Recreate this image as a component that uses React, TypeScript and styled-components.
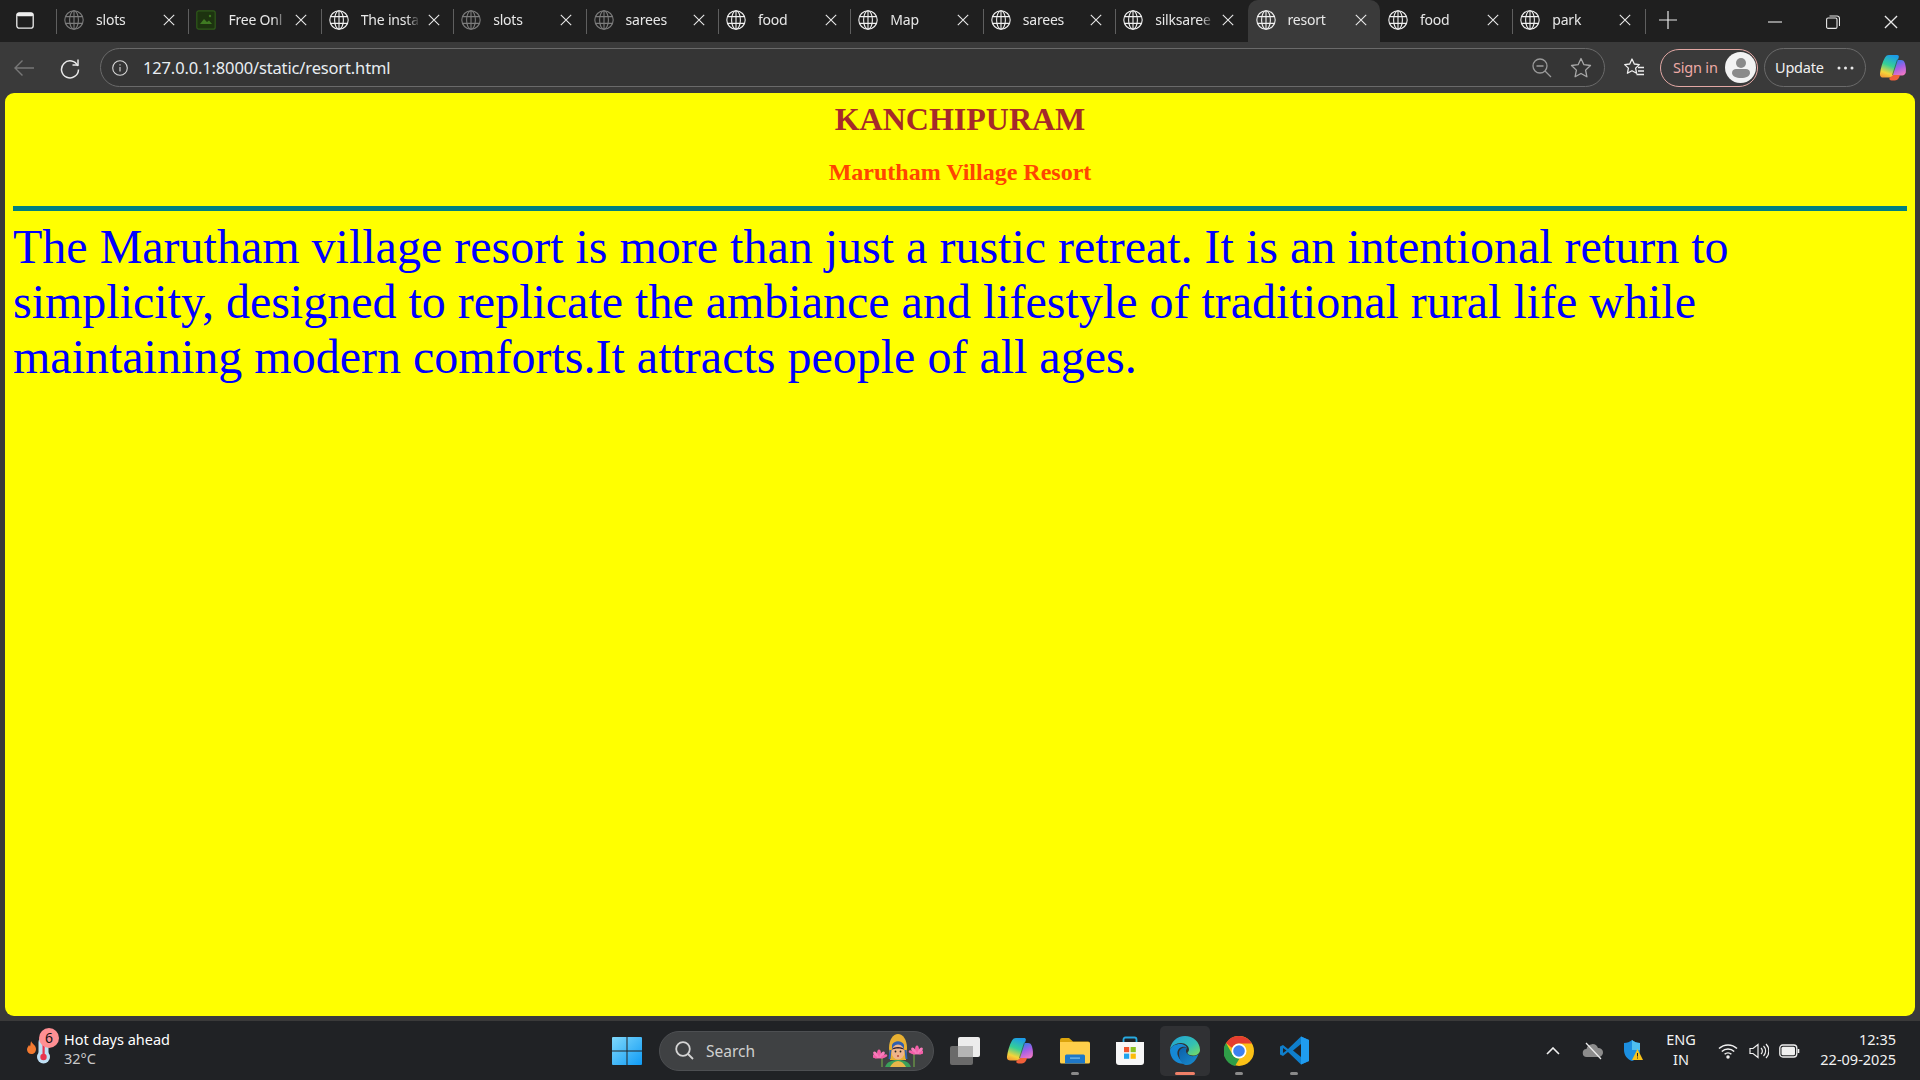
import React from 'react';
import styled, { createGlobalStyle } from 'styled-components';

const Global = createGlobalStyle`
  html, body { margin: 0; padding: 0; height: 100%; overflow: hidden; }
  body { font-family: "Noto Sans", "Open Sans", sans-serif; background: #202124; }
`;

const Screen = styled.div`
  width: 1920px;
  height: 1080px;
  display: flex;
  flex-direction: column;
`;

/* tab strip */
const TabStrip = styled.div`
  height: 42px;
  flex: none;
  display: flex;
  align-items: stretch;
  background: #1f1f1f;
  padding-left: 56px;
  position: relative;
`;

const SidebarButton = styled.div`
  position: absolute;
  left: 16px;
  top: 12px;
  display: flex;
`;

const Tab = styled.div<{ $active?: boolean; $noSep?: boolean }>`
  flex: 0 0 132.4px;
  box-sizing: border-box;
  height: 42px;
  display: flex;
  align-items: center;
  padding: 0 0 2px 8px;
  position: relative;
  color: #e8e8e8;
  background: ${(p) => (p.$active ? '#3a3a3a' : 'transparent')};
  border-radius: ${(p) => (p.$active ? '10px 10px 0 0' : '0')};

  &::before {
    content: '';
    display: ${(p) => (p.$noSep ? 'none' : 'block')};
    position: absolute;
    left: 0;
    top: 9px;
    height: 25px;
    width: 1px;
    background: #5f5f5f;
  }
`;

const TabTitle = styled.span`
  width: 59px;
  margin: 0 0 2px 12px;
  font-size: 14px;
  letter-spacing: -0.2px;
  white-space: nowrap;
  overflow: hidden;
  -webkit-mask-image: linear-gradient(to right, #000 78%, transparent 100%);
  mask-image: linear-gradient(to right, #000 78%, transparent 100%);
`;

const TabClose = styled.span`
  display: flex;
  margin-left: 8px;
`;

const NewTab = styled.div`
  position: relative;
  width: 46px;
  display: flex;
  align-items: center;
  justify-content: center;
  padding-bottom: 2px;

  &::before {
    content: '';
    position: absolute;
    left: 0;
    top: 9px;
    height: 25px;
    width: 1px;
    background: #5f5f5f;
  }
`;

const WindowControls = styled.div`
  margin-left: auto;
  display: flex;
  align-items: center;
`;

const WindowControl = styled.div`
  width: 58px;
  height: 42px;
  display: flex;
  align-items: center;
  justify-content: center;
  padding-top: 2px;
  box-sizing: border-box;
`;

/* toolbar */
const Toolbar = styled.div`
  height: 51px;
  flex: none;
  background: #3a3a3a;
  display: flex;
  align-items: center;
`;

const NavButton = styled.div<{ $w: number; $ml?: number }>`
  width: ${(p) => p.$w}px;
  margin-left: ${(p) => p.$ml ?? 0}px;
  flex: none;
  display: flex;
  justify-content: center;
  align-items: center;
`;

const AddressBar = styled.div`
  width: 1505px;
  height: 39px;
  flex: none;
  box-sizing: border-box;
  margin-left: 8px;
  border: 1px solid #6a6a6a;
  border-radius: 20px;
  background: #353535;
  display: flex;
  align-items: center;
  padding: 0 12px 0 11px;
`;

const Url = styled.span`
  margin-left: 15px;
  font-size: 16.5px;
  letter-spacing: -0.15px;
  color: #e8edf2;
`;

const BarIcons = styled.div`
  margin-left: auto;
  display: flex;
  align-items: center;
  gap: 18px;
`;

const SignIn = styled.div`
  width: 98px;
  height: 38px;
  flex: none;
  box-sizing: border-box;
  border: 1.5px solid #e3a8a4;
  border-radius: 19px;
  display: flex;
  align-items: center;
  justify-content: space-between;
  padding: 0 1px 0 12px;
  color: #eeaaa6;
  font-size: 14.5px;
  letter-spacing: -0.2px;
`;

const PillLabel = styled.span`
  margin-bottom: 2px;
`;

const Avatar = styled.div`
  width: 31px;
  height: 31px;
  border-radius: 50%;
  background: #f2f2f2;
  display: flex;
  align-items: center;
  justify-content: center;
`;

const UpdatePill = styled.div`
  width: 102px;
  height: 39px;
  flex: none;
  box-sizing: border-box;
  margin-left: 6px;
  border: 1px solid #6a6a6a;
  border-radius: 20px;
  display: flex;
  align-items: center;
  justify-content: space-between;
  padding: 0 11px 0 10px;
  color: #f0f0f0;
  font-size: 14.5px;
  letter-spacing: -0.2px;
`;

const CopilotSlot = styled.div`
  margin-left: 13px;
  display: flex;
`;

/* page */
const PageFrame = styled.div`
  flex: 1;
  min-height: 0;
  background: #3a3a3a;
  padding: 0 5px 5px;
  display: flex;
`;

const Page = styled.main`
  flex: 1;
  background: #ffff00;
  border-radius: 9px;
  padding: 0 8px;
  font-family: "Liberation Serif", "Times New Roman", serif;
  overflow: hidden;
`;

const City = styled.h1`
  margin: 8px 0 0;
  text-align: center;
  font-size: 32px;
  line-height: 37px;
  color: #a52a2a;
`;

const ResortName = styled.h2`
  margin: 21px 0 0;
  text-align: center;
  font-size: 24px;
  line-height: 27px;
  color: #ff4500;
`;

const Rule = styled.div`
  height: 5px;
  margin-top: 20px;
  background: #008080;
`;

const Body = styled.p`
  margin: 8px 0 0;
  font-size: 48px;
  line-height: 55px;
  color: #0000ff;
`;

/* taskbar */
const Taskbar = styled.footer`
  height: 59px;
  flex: none;
  background: #202225;
  display: flex;
  align-items: center;
  color: #fff;
`;

const Weather = styled.div`
  width: 600px;
  flex: none;
  box-sizing: border-box;
  padding-left: 25px;
  display: flex;
  align-items: center;
`;

const WeatherText = styled.div`
  margin: 0 0 4px 4px;
  display: flex;
  flex-direction: column;
  line-height: 19px;
`;

const WeatherTitle = styled.span`
  font-size: 14.5px;
  color: #fff;
`;

const WeatherTemp = styled.span`
  font-size: 14.5px;
  color: #c8c8c8;
`;

const Badge = styled.span`
  position: absolute;
  left: 14px;
  top: -1px;
  width: 20px;
  height: 20px;
  border-radius: 50%;
  background: #ff8f93;
  color: #111;
  font-size: 14px;
  line-height: 20px;
  text-align: center;
`;

const WeatherIcon = styled.div`
  position: relative;
  width: 35px;
  height: 44px;
  flex: none;
  display: flex;
`;

const StartButton = styled.div`
  width: 54px;
  flex: none;
  display: flex;
  justify-content: center;
`;

const SearchBox = styled.div`
  width: 275px;
  height: 40px;
  flex: none;
  box-sizing: border-box;
  margin-left: 5px;
  border: 1px solid #4d4f52;
  border-radius: 20px;
  background: #3f4143;
  display: flex;
  align-items: center;
  padding: 0 10px 0 15px;
  color: #cfcfcf;
  font-size: 15.5px;
`;

const SearchLabel = styled.span`
  margin-left: 12px;
`;

const SearchArt = styled.div`
  margin-left: auto;
  display: flex;
`;

const TaskItems = styled.div`
  display: flex;
  margin-left: 4px;
  height: 59px;
  align-items: center;
`;

const TaskItem = styled.div<{ $active?: boolean }>`
  position: relative;
  width: 50px;
  height: 50px;
  margin: 0 2.4px;
  flex: none;
  border-radius: 5px;
  display: flex;
  align-items: center;
  justify-content: center;
  background: ${(p) => (p.$active ? '#303134' : 'transparent')};
`;

const Indicator = styled.span<{ $active?: boolean }>`
  position: absolute;
  bottom: 1px;
  left: 50%;
  transform: translateX(-50%);
  width: ${(p) => (p.$active ? '20px' : '8px')};
  height: 3px;
  border-radius: 2px;
  background: ${(p) => (p.$active ? '#f08068' : '#8a8a8a')};
`;

const Tray = styled.div`
  margin-left: auto;
  display: flex;
  align-items: center;
  padding-right: 24px;
`;

const TraySlot = styled.div<{ $w: number }>`
  width: ${(p) => p.$w}px;
  flex: none;
  display: flex;
  justify-content: center;
  align-items: center;
`;

const Lang = styled.div`
  width: 50px;
  margin-bottom: 3px;
  text-align: center;
  font-size: 14.5px;
  line-height: 20px;
  color: #f2f2f2;
`;

const Clock = styled.div`
  width: 85px;
  margin: 0 0 4px 4px;
  text-align: right;
  font-size: 14.5px;
  line-height: 20px;
  color: #f2f2f2;
  white-space: nowrap;
`;

/* icons */
const Globe = ({ dim }: { dim?: boolean }) => (
  <svg width="20" height="20" viewBox="0 0 20 20" fill="none" stroke={dim ? '#7c7c7c' : '#f0f0f0'} strokeWidth="1.1">
    <circle cx="10" cy="10" r="9.2" />
    <ellipse cx="10" cy="10" rx="4.4" ry="9.2" />
    <path d="M10 .8v18.4M1.6 6.6h16.8M1.6 13.4h16.8" />
  </svg>
);

const PictureIcon = () => (
  <svg width="20" height="20" viewBox="0 0 20 20">
    <rect x=".8" y=".8" width="18.4" height="18.4" rx="2" fill="#1d3310" stroke="#2f5a1a" strokeWidth="1.2" />
    <path d="M4 14l4-5 3 3 2-1.5 3 3.5z" fill="#3f7a22" />
    <circle cx="14" cy="6" r="1.2" fill="#3f7a22" />
  </svg>
);

const CloseX = ({ size = 12, color = '#e8e8e8' }: { size?: number; color?: string }) => (
  <svg width={size} height={size} viewBox="0 0 12 12" stroke={color} strokeWidth="1.1" fill="none">
    <path d="M.8.8l10.4 10.4M11.2.8L.8 11.2" />
  </svg>
);

const CopilotIcon = ({ size = 28, id }: { size?: number; id: string }) => (
  <svg width={size} height={size} viewBox="0 0 28 28">
    <defs>
      <linearGradient id={`${id}a`} x1="0.6" y1="0" x2="0.3" y2="1">
        <stop offset="0" stopColor="#1c9ce8" />
        <stop offset=".45" stopColor="#35cf96" />
        <stop offset=".8" stopColor="#f4d53a" />
        <stop offset="1" stopColor="#f5a035" />
      </linearGradient>
      <linearGradient id={`${id}b`} x1="0.3" y1="0" x2="0.7" y2="1">
        <stop offset="0" stopColor="#2f7fea" />
        <stop offset=".5" stopColor="#a45fe6" />
        <stop offset="1" stopColor="#f078c4" />
      </linearGradient>
    </defs>
    <path d="M17 6h5c2 0 3.300 1.200 4 3.400.8 2.800 1.200 6 .8 8.800-.3 2-1.600 3.200-3.600 3.200H13z" fill={`url(#${id}b)`} />
    <path d="M10 1h8c1.600 0 2.200 1 1.700 2.400L14 21c-.6 1.800-2 2.600-3.600 2.600H4.500C2 23.600.6 22 1 19.400 1.800 14 3.500 8 6 3.600 7 1.800 8.300 1 10 1z" fill={`url(#${id}a)`} />
    <path d="M10.500 24l4-3h6.500c-.8 3.400-2.600 5.500-5 5.500h-3.500c-1.500 0-2.500-1-2-2.500z" fill="#f0603a" />
    <path d="M18.500 5.500L13.500 21" stroke="#2a2a2a" strokeOpacity=".55" strokeWidth="1" fill="none" />
  </svg>
);

const FolderIcon = () => (
  <svg width="30" height="27" viewBox="0 0 30 27">
    <path d="M0 3a2 2 0 012-2h7l4 3.500h15a2 2 0 012 2V8H0z" fill="#dba40c" />
    <path d="M0 5h28a2 2 0 012 2v18a1.500 1.500 0 01-1.500 1.500h-27A1.500 1.500 0 010 25z" fill="#ffcf4a" />
    <path d="M5 19a1.500 1.500 0 011.500-1.500h17A1.500 1.500 0 0125 19v7.500H5z" fill="#1f78c8" />
    <rect x="10" y="20.500" width="10" height="1.200" fill="#7fc0f0" />
  </svg>
);

const StoreIcon = () => (
  <svg width="30" height="30" viewBox="0 0 30 30">
    <path d="M8.500 6V3.500C8.500 2.500 9.200 1.500 10.500 1.500h9c1.300 0 2 1 2 2V6" fill="none" stroke="#27a9e0" strokeWidth="1.800" />
    <path d="M1 6h28v20a3 3 0 01-3 3H4a3 3 0 01-3-3z" fill="#f7f7f7" />
    <rect x="9" y="11" width="5.200" height="5.200" fill="#f0562e" />
    <rect x="15.600" y="11" width="5.200" height="5.200" fill="#8cc220" />
    <rect x="9" y="17.600" width="5.200" height="5.200" fill="#1fa4ee" />
    <rect x="15.600" y="17.600" width="5.200" height="5.200" fill="#fbbc09" />
  </svg>
);

const EdgeIcon = () => (
  <svg width="30" height="30" viewBox="0 0 30 30">
    <defs>
      <linearGradient id="edgeTop" x1="0" y1="0" x2="1" y2="1">
        <stop offset="0" stopColor="#1f9fd8" />
        <stop offset=".6" stopColor="#35c1b0" />
        <stop offset="1" stopColor="#7fdc5a" />
      </linearGradient>
      <linearGradient id="edgeLow" x1="0" y1="0" x2="1" y2="1">
        <stop offset="0" stopColor="#0c5fa8" />
        <stop offset="1" stopColor="#1a8fd0" />
      </linearGradient>
    </defs>
    <path d="M15 0C23 0 30 6 30 14c0 3.500-3 5.500-7 5.500-3 0-5.500-1-5.500-2.500 0-1 1.500-1.500 1.500-3.500C19 10 15.500 7 11 7 6 7 1 10 0 14 .5 6 7 0 15 0z" fill="url(#edgeTop)" />
    <path d="M0 14c1-4 5.500-6 10-6 3.500 0 6.500 2 7 4-1-1-3-1.500-5-1-4 1-5.500 5-4 9 1 3 4 6 7.500 7.500C7 29 0 23 0 14z" fill="#1689d4" />
    <path d="M9 17c0-3 2.500-5.500 6-5.500 1 0 1.500 0 2 .5-1 1.500-1.500 3-.5 5 1.500 2.500 5 3.500 8 3 1.500-.2 3-1 4-2-2 6-7 12-13 11-4-1-6.500-6-6.500-12z" fill="url(#edgeLow)" />
  </svg>
);

const ChromeIcon = () => (
  <svg width="30" height="30" viewBox="0 0 30 30">
    <circle cx="15" cy="15" r="15" fill="#fbc116" />
    <path d="M15 0a15 15 0 0113 7.500H15a7.500 7.500 0 00-6.900 4.600L2 7A15 15 0 0115 0z" fill="#e53d30" />
    <path d="M2 7l6.500 11.500a7.500 7.500 0 007 4L11 30A15 15 0 012 7z" fill="#2f9e48" />
    <circle cx="15" cy="15" r="7.500" fill="#fff" />
    <circle cx="15" cy="15" r="5.800" fill="#3d80ef" />
  </svg>
);

const VsCodeIcon = () => (
  <svg width="29" height="29" viewBox="0 0 29 29">
    <path d="M21 .5L29 4v21l-8 3.500L8 16l-5 4-3-1.500v-8L3 9l5 4z" fill="#0f7fcc" />
    <path d="M21 .5L29 4v21l-8 3.500z" fill="#1f9cf0" />
    <path d="M21 8l-8 6.500 8 6.500z" fill="#202225" />
    <path d="M3 12l3.500 2.500L3 17z" fill="#202225" />
  </svg>
);

const Lotus = ({ x, y }: { x: number; y: number }) => (
  <g transform={`translate(${x} ${y})`} fill="#f45fa8">
    <ellipse cx="0" cy="-1" rx="2" ry="4.500" />
    <ellipse cx="-3" cy="0" rx="1.800" ry="4" transform="rotate(-35 -3 0)" fill="#f77cba" />
    <ellipse cx="3" cy="0" rx="1.800" ry="4" transform="rotate(35 3 0)" fill="#f77cba" />
    <ellipse cx="-5" cy="1.500" rx="1.500" ry="3.500" transform="rotate(-65 -5 1.500)" />
    <ellipse cx="5" cy="1.500" rx="1.500" ry="3.500" transform="rotate(65 5 1.500)" />
  </g>
);

const GoddessArt = () => (
  <svg width="50" height="33" viewBox="0 0 50 33">
    <path d="M9 24v9M41 20v13" stroke="#7ab648" strokeWidth="1" />
    <Lotus x={6} y={21} />
    <Lotus x={44} y={17} />
    <path d="M12 33c2-5 6-7 13-7s11 2 13 7z" fill="#3aa05a" />
    <path d="M17 33c2-4 5-6 8-6s6 2 8 6z" fill="#e8b64a" />
    <path d="M16 14C16 6 20 0 25 0s9 6 9 14l-1 12H17z" fill="#e7b032" />
    <path d="M19 11c2-5 10-5 12 0v4H19z" fill="#2f5fb0" />
    <ellipse cx="25" cy="18" rx="6.500" ry="7.500" fill="#eeb48a" />
    <path d="M18.500 16c1-4 12-4 13 0-3-2-10-2-13 0z" fill="#2b2030" />
    <circle cx="22.500" cy="17.500" r=".9" fill="#222" />
    <circle cx="27.500" cy="17.500" r=".9" fill="#222" />
    <circle cx="25" cy="22" r="1" fill="#b5443a" />
    <path d="M17.500 16l-1 9M32.500 16l1 9" stroke="#2f5fb0" strokeWidth="2" />
  </svg>
);

const tabs = [
  { title: 'slots', dim: true },
  { title: 'Free Onl', picture: true },
  { title: 'The insta' },
  { title: 'slots', dim: true },
  { title: 'sarees', dim: true },
  { title: 'food' },
  { title: 'Map' },
  { title: 'sarees' },
  { title: 'silksaree' },
  { title: 'resort', active: true },
  { title: 'food', noSep: true },
  { title: 'park' },
];

export default function App() {
  return (
    <Screen>
      <Global />
      <TabStrip>
        <SidebarButton>
          <svg width="18" height="17" viewBox="0 0 18 17" fill="none">
            <rect x=".8" y=".8" width="16.400" height="15.400" rx="2.500" stroke="#eee" strokeWidth="1.300" />
            <rect x=".8" y=".8" width="16.400" height="3.500" rx="1.500" fill="#eee" />
          </svg>
        </SidebarButton>
        {tabs.map((t, i) => (
          <Tab key={i} $active={t.active} $noSep={t.active || t.noSep}>
            {t.picture ? <PictureIcon /> : <Globe dim={t.dim} />}
            <TabTitle>{t.title}</TabTitle>
            <TabClose><CloseX /></TabClose>
          </Tab>
        ))}
        <NewTab>
          <svg width="18" height="18" viewBox="0 0 18 18" stroke="#e8e8e8" strokeWidth="1.200">
            <path d="M9 0v18M0 9h18" />
          </svg>
        </NewTab>
        <WindowControls>
          <WindowControl>
            <svg width="14" height="2" viewBox="0 0 14 2"><path d="M0 1h14" stroke="#e8e8e8" strokeWidth="1.100" /></svg>
          </WindowControl>
          <WindowControl>
            <svg width="14" height="14" viewBox="0 0 14 14" fill="none" stroke="#e8e8e8" strokeWidth="1.100">
              <rect x=".6" y="3" width="10.400" height="10.400" rx="1.500" />
              <path d="M3.500 1h7.500a2.500 2.500 0 012.500 2.500V11" />
            </svg>
          </WindowControl>
          <WindowControl>
            <CloseX size={14} />
          </WindowControl>
        </WindowControls>
      </TabStrip>

      <Toolbar>
        <NavButton $w={48}>
          <svg width="22" height="18" viewBox="0 0 22 18" fill="none" stroke="#777" strokeWidth="1.400">
            <path d="M21 9H2M9.500 1.500L2 9l7.500 7.500" />
          </svg>
        </NavButton>
        <NavButton $w={44}>
          <svg width="22" height="22" viewBox="0 0 22 22" fill="none" stroke="#e8e8e8" strokeWidth="1.500">
            <path d="M18.800 9A8.500 8.500 0 1 0 19.500 12.500" />
            <path d="M19 2.500V8h-5.500" />
          </svg>
        </NavButton>
        <AddressBar>
          <svg width="16" height="16" viewBox="0 0 16 16" fill="none" stroke="#d8d8d8" strokeWidth="1.100">
            <circle cx="8" cy="8" r="7.300" />
            <path d="M8 7v4.500M8 4.200v1.300" />
          </svg>
          <Url>127.0.0.1:8000/static/resort.html</Url>
          <BarIcons>
            <svg width="20" height="20" viewBox="0 0 20 20" fill="none" stroke="#9a9a9a" strokeWidth="1.300">
              <circle cx="8" cy="8" r="7" />
              <path d="M13 13l6 6M4.500 8h7" />
            </svg>
            <svg width="22" height="22" viewBox="0 0 22 22" fill="none" stroke="#a8a8a8" strokeWidth="1.300" strokeLinejoin="round">
              <path d="M11 1.500l2.900 6.200 6.600.8-4.900 4.600 1.300 6.700-5.900-3.300-5.900 3.300 1.300-6.700L1.500 8.500l6.600-.8z" />
            </svg>
          </BarIcons>
        </AddressBar>
        <NavButton $w={52} $ml={3}>
          <svg width="22" height="22" viewBox="0 0 22 22" fill="none" stroke="#eee" strokeWidth="1.300" strokeLinejoin="round">
            <path d="M9 2l2.300 5 5 .6-3.700 3.500 1 5.200L9 13.700l-4.600 2.600 1-5.200L1.700 7.600l5-.6zM15 10.500h6M15 14h6M13.500 17.500H21" />
          </svg>
        </NavButton>
        <SignIn>
          <PillLabel>Sign in</PillLabel>
          <Avatar>
            <svg width="20" height="22" viewBox="0 0 20 22" fill="#8a8a8a">
              <circle cx="10" cy="6" r="5" />
              <path d="M1 16c0-3 2-4 4-4h10c2 0 4 1 4 4 0 3-4 5-9 5s-9-2-9-5z" />
            </svg>
          </Avatar>
        </SignIn>
        <UpdatePill>
          <PillLabel>Update</PillLabel>
          <svg width="17" height="4" viewBox="0 0 17 4" fill="#e8e8e8">
            <circle cx="2" cy="2" r="1.500" />
            <circle cx="8.500" cy="2" r="1.500" />
            <circle cx="15" cy="2" r="1.500" />
          </svg>
        </UpdatePill>
        <CopilotSlot>
          <CopilotIcon id="cpTop" />
        </CopilotSlot>
      </Toolbar>

      <PageFrame>
        <Page>
          <City>KANCHIPURAM</City>
          <ResortName>Marutham Village Resort</ResortName>
          <Rule />
          <Body>
            The Marutham village resort is more than just a rustic retreat. It is an intentional return to simplicity,
            designed to replicate the ambiance and lifestyle of traditional rural life while maintaining modern
            comforts.It attracts people of all ages.
          </Body>
        </Page>
      </PageFrame>

      <Taskbar>
        <Weather>
          <WeatherIcon>
            <svg width="35" height="44" viewBox="0 0 35 44">
              <path d="M6 12c1 3 5 4 5 8 0 3-2 5-4.500 5S2 23 2 20.500c0-2 1.500-3 2-4.500.5.500.8 1 1 1.500.5-1.500.5-3.500 1-5z" fill="#f47a30" />
              <rect x="13.500" y="8" width="10" height="24" rx="5" fill="#bfe0f5" />
              <circle cx="18.500" cy="28" r="6.500" fill="#bfe0f5" />
              <rect x="17.500" y="14" width="2.200" height="14" fill="#e8344e" />
              <circle cx="18.500" cy="28" r="3.200" fill="#e8344e" />
            </svg>
            <Badge>6</Badge>
          </WeatherIcon>
          <WeatherText>
            <WeatherTitle>Hot days ahead</WeatherTitle>
            <WeatherTemp>32°C</WeatherTemp>
          </WeatherText>
        </Weather>
        <StartButton>
          <svg width="30" height="30" viewBox="0 0 30 30">
            <defs>
              <linearGradient id="winGrad" x1="0" y1="0" x2="1" y2="1">
                <stop offset="0" stopColor="#7fd8fb" />
                <stop offset="1" stopColor="#0f9bf5" />
              </linearGradient>
            </defs>
            <path d="M1 1h13.500v13.500H0V2a1 1 0 011-1zM15.500 1H29a1 1 0 011 1v12.500H15.500zM0 15.500h14.500V29H1a1 1 0 01-1-1zM15.500 15.500H30V28a1 1 0 01-1 1H15.500z" fill="url(#winGrad)" />
          </svg>
        </StartButton>
        <SearchBox>
          <svg width="19" height="19" viewBox="0 0 19 19" fill="none" stroke="#d4d4d4" strokeWidth="1.800">
            <circle cx="8" cy="8" r="6.800" />
            <path d="M13 13l5 5" />
          </svg>
          <SearchLabel>Search</SearchLabel>
          <SearchArt><GoddessArt /></SearchArt>
        </SearchBox>
        <TaskItems>
          <TaskItem>
            <svg width="30" height="28" viewBox="0 0 30 28">
              <rect x="0" y="9" width="23" height="19" rx="2" fill="#6a6a6a" />
              <rect x="8" y="0" width="22" height="20" rx="2" fill="#ececec" />
              <rect x="8" y="9" width="15" height="11" fill="#b4b4b4" />
            </svg>
          </TaskItem>
          <TaskItem><CopilotIcon id="cpTask" /></TaskItem>
          <TaskItem><FolderIcon /><Indicator /></TaskItem>
          <TaskItem><StoreIcon /></TaskItem>
          <TaskItem $active><EdgeIcon /><Indicator $active /></TaskItem>
          <TaskItem><ChromeIcon /><Indicator /></TaskItem>
          <TaskItem><VsCodeIcon /><Indicator /></TaskItem>
        </TaskItems>
        <Tray>
          <TraySlot $w={40}>
            <svg width="14" height="8" viewBox="0 0 14 8" fill="none" stroke="#f0f0f0" strokeWidth="1.600">
              <path d="M1 7l6-6 6 6" />
            </svg>
          </TraySlot>
          <TraySlot $w={40}>
            <svg width="22" height="18" viewBox="0 0 22 18">
              <path d="M5 15a4 4 0 01-.5-8 6 6 0 0111.500-1 4.500 4.500 0 011 9z" fill="#8c8c8c" />
              <path d="M4 1l15 16" stroke="#ececec" strokeWidth="1.200" />
            </svg>
          </TraySlot>
          <TraySlot $w={40}>
            <svg width="22" height="22" viewBox="0 0 22 22">
              <path d="M10 0c2 2 5 3 8 3v7c0 5-3 9-8 11-5-2-8-6-8-11V3c3 0 6-1 8-3z" fill="#1c8fe0" />
              <path d="M10 0c2 2 5 3 8 3v7H10z" fill="#4fc0f0" />
              <path d="M15.500 9l5.500 11H10z" fill="#f8c418" />
              <path d="M15.500 13v3.500M15.500 17.500v1" stroke="#222" strokeWidth="1" />
            </svg>
          </TraySlot>
          <TraySlot $w={56}>
            <Lang>ENG<br />IN</Lang>
          </TraySlot>
          <TraySlot $w={38}>
            <svg width="20" height="16" viewBox="0 0 20 16" fill="none" stroke="#f0f0f0" strokeWidth="1.500">
              <path d="M1 5.500a13 13 0 0118 0M3.800 8.500a9 9 0 0112.400 0M6.600 11.300a5 5 0 016.800 0" />
              <circle cx="10" cy="14" r="1" fill="#f0f0f0" />
            </svg>
          </TraySlot>
          <TraySlot $w={24}>
            <svg width="20" height="16" viewBox="0 0 20 16" fill="none" stroke="#f0f0f0" strokeWidth="1.200">
              <path d="M1 5.500h3L9 1.500v13l-5-4H1zM12 5a4 4 0 010 6M14.500 3a7 7 0 010 10M17 1a10 10 0 010 14" />
            </svg>
          </TraySlot>
          <TraySlot $w={36}>
            <svg width="21" height="14" viewBox="0 0 21 14" fill="none">
              <rect x=".8" y="1" width="17" height="12" rx="3" stroke="#f0f0f0" strokeWidth="1.300" />
              <rect x="2.500" y="2.800" width="13.500" height="8.400" rx="1.500" fill="#f0f0f0" />
              <path d="M19.500 5v4" stroke="#f0f0f0" strokeWidth="1.600" />
            </svg>
          </TraySlot>
          <Clock>12:35<br />22-09-2025</Clock>
        </Tray>
      </Taskbar>
    </Screen>
  );
}
